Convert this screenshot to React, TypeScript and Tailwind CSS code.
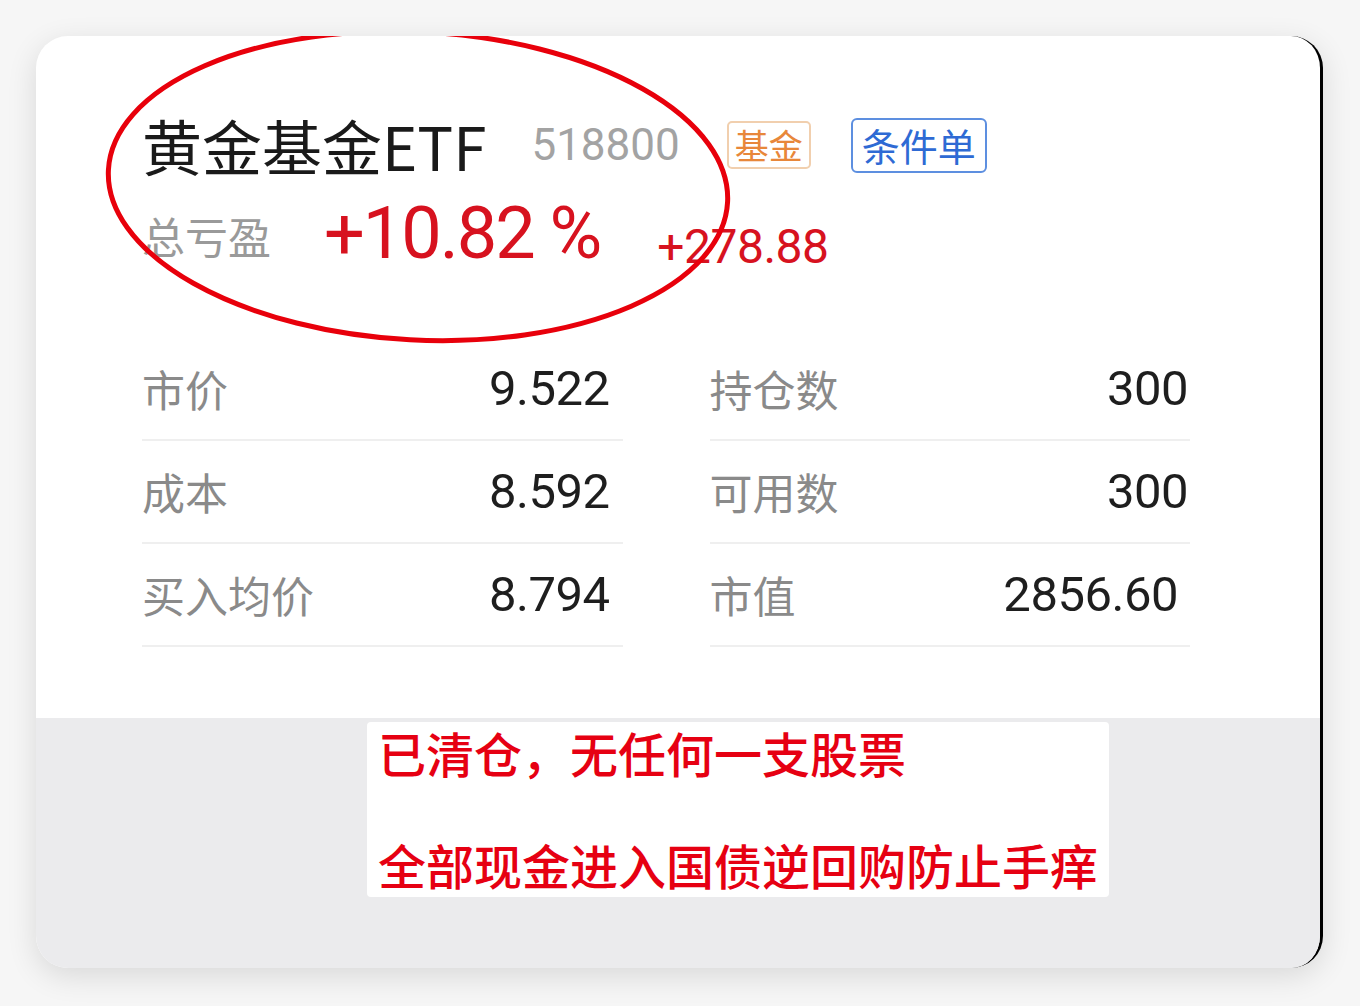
import React from 'react';

const cjk = "font-['Noto_Sans_CJK_SC',sans-serif]";
const num = "font-['Roboto','Noto_Sans_CJK_SC',sans-serif]";

const Row = ({ label, value, pr }: { label: string; value: string; pr: string }) => (
    <div className={`flex items-center justify-between h-[103px] border-b-2 border-[#efefef] ${pr}`}>
        <span className={`${cjk} text-[43px] leading-none text-[#8a8a8a]`}>{label}</span>
        <span className={`${num} text-[49px] leading-none text-[#1e1e1e] tracking-[-0.5px]`}>{value}</span>
    </div>
);

export default function App() {
    return (
        <div className="w-[1360px] h-[1006px] bg-[#f6f6f6] pt-[36px] pl-[36px]">
            <div className="relative w-[1287px] h-[932px] rounded-[32px] overflow-hidden bg-white shadow-[0_8px_30px_rgba(0,0,0,0.12)] border-r-[3px] border-r-black flex flex-col">
                {/* upper white part */}
                <div className="h-[682px] pl-[106px] pr-[130px] pt-[78px]">
                    <div className="flex items-center h-[62px]">
                        <span className={`${cjk} text-[60px] leading-none text-[#1a1a1a]`}>黄金基金ETF</span>
                        <span className={`${num} text-[44px] leading-none text-[#a3a3a3] ml-[45px]`}>518800</span>
                        <span className={`${cjk} ml-[47px] h-[48px] px-[6px] flex items-center border-2 border-[#f1cfae] rounded-[5px] text-[34px] leading-none text-[#e8873a]`}>基金</span>
                        <span className={`${cjk} ml-[40px] h-[55px] px-[9px] flex items-center border-2 border-[#5d8fe0] rounded-[6px] text-[38px] leading-none text-[#2e6ad4]`}>条件单</span>
                    </div>
                    <div className="flex items-end h-[70px] mt-[24px]">
                        <span className={`${cjk} text-[43px] leading-none text-[#9a9a9a] mb-[13px]`}>总亏盈</span>
                        <span className={`${num} text-[72px] leading-none text-[#d7121f] ml-[53px] tracking-[-2px]`}>+10.82 %</span>
                        <span className={`${num} text-[48px] leading-none text-[#d7121f] ml-[57px] -mb-[1px] tracking-[-0.5px]`}>+278.88</span>
                    </div>
                    <div className="grid grid-cols-2 gap-x-[87px] mt-[68px]">
                        <div>
                            <Row label="市价" value="9.522" pr="pr-[13px]" />
                            <Row label="成本" value="8.592" pr="pr-[13px]" />
                            <Row label="买入均价" value="8.794" pr="pr-[13px]" />
                        </div>
                        <div>
                            <Row label="持仓数" value="300" pr="pr-[2px]" />
                            <Row label="可用数" value="300" pr="pr-[2px]" />
                            <Row label="市值" value="2856.60" pr="pr-[12px]" />
                        </div>
                    </div>
                </div>

                {/* lower grey part */}
                <div className="flex-1 bg-[#ebebed] pt-[4px] pl-[331px]">
                    <div className={`${cjk} w-[742px] h-[175px] bg-white rounded-[4px] pl-[11px] pt-[2px] text-[48px] leading-[56px] font-medium text-[#e60012]`}>
                        <p>已清仓，无任何一支股票</p>
                        <p className="mt-[56px]">全部现金进入国债逆回购防止手痒</p>
                    </div>
                </div>

                {/* hand-drawn annotation */}
                <svg className="absolute left-0 top-0 pointer-events-none" width="760" height="330">
                    <ellipse cx="382" cy="150" rx="310" ry="154" fill="none" stroke="#e8000b" strokeWidth="5" transform="rotate(3 382 150)" />
                </svg>
            </div>
        </div>
    );
}
